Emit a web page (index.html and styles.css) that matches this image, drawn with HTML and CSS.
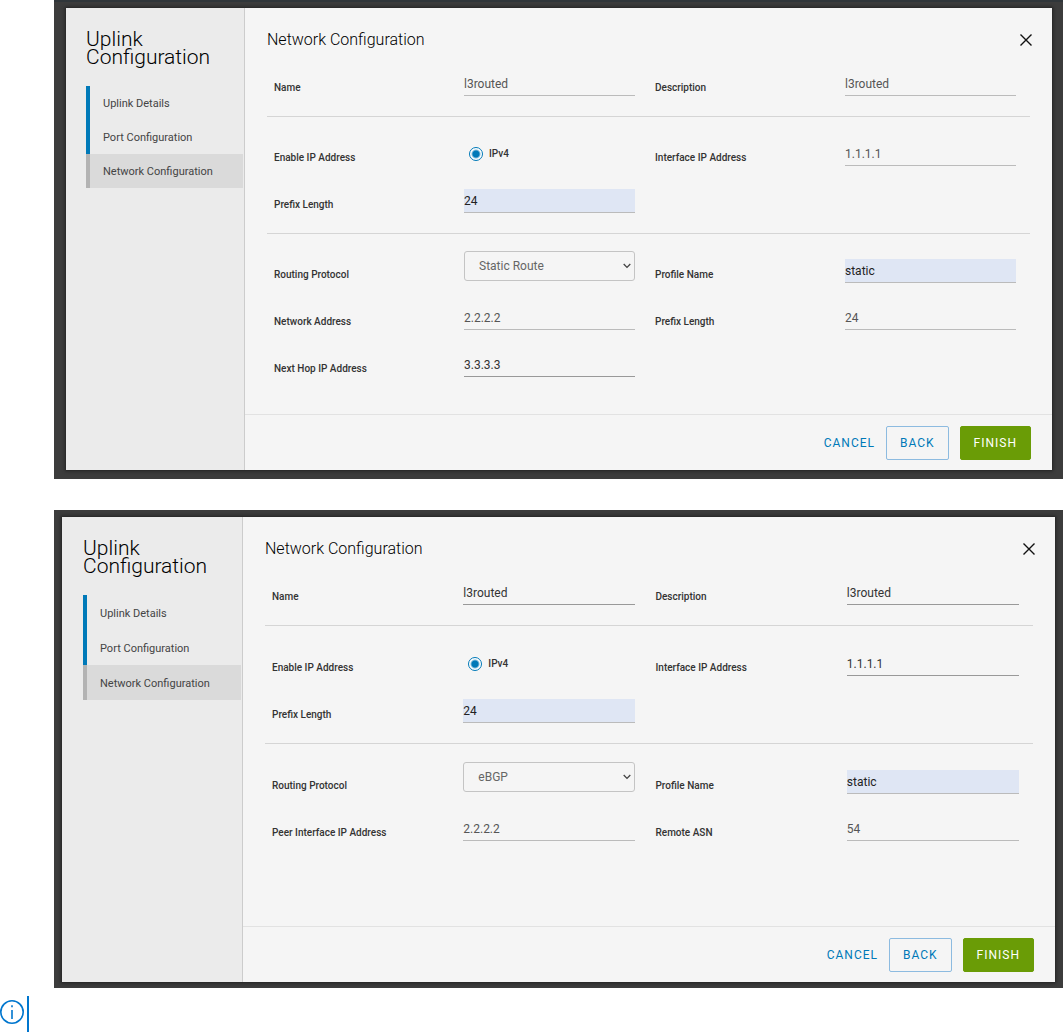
FILE: index.html
```html
<!DOCTYPE html>
<html lang="en">
<head>
  <meta charset="UTF-8" />
  <meta name="viewport" content="width=device-width, initial-scale=1.0"/>
  <title>Uplink Configuration</title>
  <link rel="stylesheet" href="styles.css">
</head>
<body>
  <main>
    <section class="backdrop backdrop-static">
      <div class="dialog">
        <aside class="sidebar">
          <h1>Uplink<br>Configuration</h1>
          <nav class="steps">
            <a href="#">Uplink Details</a>
            <a href="#">Port Configuration</a>
            <a href="#" class="current">Network Configuration</a>
          </nav>
        </aside>

        <form class="panel">
          <header class="panel-header">
            <h2>Network Configuration</h2>
            <button type="button" class="close" aria-label="Close">
              <svg width="12" height="12" viewBox="0 0 12 12"><path d="M.5.5l11 11M11.5.5l-11 11"/></svg>
            </button>
          </header>

          <div class="panel-body">
            <div class="group">
              <div class="row">
                <label for="s-name">Name</label>
                <input type="text" id="s-name" value="l3routed">
                <label for="s-description">Description</label>
                <input type="text" id="s-description" value="l3routed">
              </div>
            </div>

            <div class="group">
              <div class="row">
                <span class="label">Enable IP Address</span>
                <label class="radio"><input type="radio" name="s-ip" checked>IPv4</label>
                <label for="s-interface">Interface IP Address</label>
                <input type="text" id="s-interface" value="1.1.1.1">
              </div>
              <div class="row">
                <label for="s-prefix">Prefix Length</label>
                <input type="text" id="s-prefix" class="filled" value="24">
              </div>
            </div>

            <div class="group">
              <div class="row">
                <label for="s-protocol">Routing Protocol</label>
                <div class="select">
                  <select id="s-protocol"><option>Static Route</option><option>eBGP</option></select>
                  <svg width="8" height="6" viewBox="0 0 8 6"><path d="M.7 1L4 4.4 7.3 1"/></svg>
                </div>
                <label for="s-profile">Profile Name</label>
                <input type="text" id="s-profile" class="filled" value="static">
              </div>
              <div class="row">
                <label for="s-network">Network Address</label>
                <input type="text" id="s-network" value="2.2.2.2">
                <label for="s-network-prefix">Prefix Length</label>
                <input type="text" id="s-network-prefix" value="24">
              </div>
              <div class="row">
                <label for="s-hop">Next Hop IP Address</label>
                <input type="text" id="s-hop" class="dark" value="3.3.3.3">
              </div>
            </div>
          </div>

          <footer class="actions">
            <button type="button" class="btn btn-link">Cancel</button>
            <button type="button" class="btn btn-outline">Back</button>
            <button type="button" class="btn btn-primary">Finish</button>
          </footer>
        </form>
      </div>
    </section>

    <section class="backdrop backdrop-ebgp">
      <div class="dialog">
        <aside class="sidebar">
          <h1>Uplink<br>Configuration</h1>
          <nav class="steps">
            <a href="#">Uplink Details</a>
            <a href="#">Port Configuration</a>
            <a href="#" class="current">Network Configuration</a>
          </nav>
        </aside>

        <form class="panel">
          <header class="panel-header">
            <h2>Network Configuration</h2>
            <button type="button" class="close" aria-label="Close">
              <svg width="12" height="12" viewBox="0 0 12 12"><path d="M.5.5l11 11M11.5.5l-11 11"/></svg>
            </button>
          </header>

          <div class="panel-body">
            <div class="group">
              <div class="row">
                <label for="b-name">Name</label>
                <input type="text" id="b-name" class="dark" value="l3routed">
                <label for="b-description">Description</label>
                <input type="text" id="b-description" class="dark" value="l3routed">
              </div>
            </div>

            <div class="group">
              <div class="row">
                <span class="label">Enable IP Address</span>
                <label class="radio"><input type="radio" name="b-ip" checked>IPv4</label>
                <label for="b-interface">Interface IP Address</label>
                <input type="text" id="b-interface" class="dark" value="1.1.1.1">
              </div>
              <div class="row">
                <label for="b-prefix">Prefix Length</label>
                <input type="text" id="b-prefix" class="filled" value="24">
              </div>
            </div>

            <div class="group">
              <div class="row">
                <label for="b-protocol">Routing Protocol</label>
                <div class="select">
                  <select id="b-protocol"><option>eBGP</option><option>Static Route</option></select>
                  <svg width="8" height="6" viewBox="0 0 8 6"><path d="M.7 1L4 4.4 7.3 1"/></svg>
                </div>
                <label for="b-profile">Profile Name</label>
                <input type="text" id="b-profile" class="filled" value="static">
              </div>
              <div class="row">
                <label for="b-peer">Peer Interface IP Address</label>
                <input type="text" id="b-peer" value="2.2.2.2">
                <label for="b-asn">Remote ASN</label>
                <input type="text" id="b-asn" value="54">
              </div>
            </div>
          </div>

          <footer class="actions">
            <button type="button" class="btn btn-link">Cancel</button>
            <button type="button" class="btn btn-outline">Back</button>
            <button type="button" class="btn btn-primary">Finish</button>
          </footer>
        </form>
      </div>
    </section>
  </main>

  <div class="note">
    <svg width="24" height="24" viewBox="0 0 24 24">
      <circle cx="12" cy="12" r="11.2"/>
      <path d="M12 10v9M12 5.2v2"/>
    </svg>
  </div>
</body>
</html>
```
FILE: styles.css
```css
* {
  margin: 0;
  padding: 0;
  box-sizing: border-box;
}

body {
  font-family: Roboto, 'Liberation Sans', sans-serif;
  font-size: 12px;
  background-color: #fff;
  color: #333;
}

main {
  display: flex;
  flex-direction: column;
  gap: 31px;
  margin-left: 54px;
}

.backdrop {
  background-color: #3c3c3c;
}

.backdrop-static {
  --sidebar: 179px;
  --indent: 20px;
  --step: 34px;
  --group-top: 22px;
  --body-height: 345px;
  padding: 6px 11px 9px 12px;
  border-top: 2px solid #30363a;
}

.backdrop-ebgp {
  --sidebar: 181px;
  --indent: 21px;
  --step: 35px;
  --group-top: 23px;
  --body-height: 348px;
  padding: 7px 8px 6px;
}

.dialog {
  display: flex;
  background-color: #f5f5f5;
  box-shadow: 0 0 3px 1px #222;
}

/* wizard steps */
.sidebar {
  flex: none;
  width: var(--sidebar);
  padding: 22px 1px 0 var(--indent);
  background-color: #ebebeb;
  border-right: 1px solid #ccc;
}

.sidebar h1 {
  color: #000;
  font-size: 21px;
  font-weight: 300;
  line-height: 18px;
  margin-bottom: 20px;
}

.steps a {
  display: block;
  height: var(--step);
  line-height: var(--step);
  padding: 1px 0 0 13px;
  border-left: 4px solid #0079b8;
  color: #444;
  font-size: 11px;
  text-decoration: none;
  white-space: nowrap;
}

.steps .current {
  background-color: #dadada;
  border-color: #b3b3b3;
}

/* form */
.panel {
  flex: 1;
  min-width: 0;
}

.panel-header {
  display: flex;
  justify-content: space-between;
  align-items: center;
  height: 61px;
  padding: 2px 20px 0 22px;
}

.panel-header h2 {
  color: #000;
  font-size: 16px;
  font-weight: 300;
  line-height: 20px;
}

.close {
  display: flex;
  background: none;
  border: none;
  cursor: pointer;
}

.close path {
  stroke: #111;
  stroke-width: 1.4;
}

.panel-body {
  min-height: var(--body-height);
  padding: 0 22px;
}

.group + .group {
  padding-top: var(--group-top);
  border-top: 1px solid #d5d5d5;
}

.row {
  display: grid;
  grid-template-columns: 10fr 9fr 20px 10fr 9fr;
  grid-template-rows: 27px;
  align-items: end;
  height: 47px;
  padding: 0 14px 20px 7px;
}

.row > :nth-child(3) {
  grid-column: 4;
}

.row > label,
.row > .label {
  font-size: 10px;
  font-weight: 500;
  line-height: 16px;
}

.row > .radio {
  display: flex;
  align-items: center;
  gap: 6px;
  padding: 0 0 4px 5px;
}

.radio input {
  appearance: none;
  width: 14px;
  height: 14px;
  border: 1px solid #0079b8;
  border-radius: 50%;
  background: radial-gradient(circle, #0079b8 3px, #fff 5px);
}

input[type="text"] {
  width: 100%;
  height: 24px;
  border: none;
  border-bottom: 1px solid #bbb;
  border-radius: 0;
  background: none;
  color: #555;
  font: inherit;
}

input.dark {
  border-color: #999;
  color: #333;
}

input.filled {
  background-color: #dfe6f4;
  color: #222;
}

.select {
  position: relative;
  margin-bottom: 2px;
}

.select select {
  appearance: none;
  display: block;
  width: 100%;
  height: 30px;
  padding: 0 20px 0 14px;
  border: 1px solid #c4c4c4;
  border-radius: 3px;
  background-color: #f5f5f5;
  color: #666;
  font: inherit;
}

.select svg {
  position: absolute;
  top: 12px;
  right: 4px;
  pointer-events: none;
}

.select path {
  fill: none;
  stroke: #444;
  stroke-width: 1.3;
}

.actions {
  display: flex;
  justify-content: flex-end;
  align-items: center;
  gap: 11px;
  height: 56px;
  padding: 1px 21px 0 0;
  border-top: 1px solid #e2e2e2;
}

.btn {
  height: 34px;
  padding: 0 13px;
  border: 1px solid transparent;
  border-radius: 2px;
  background: none;
  font-family: inherit;
  font-size: 12px;
  font-weight: 400;
  letter-spacing: 1px;
  text-transform: uppercase;
  cursor: pointer;
}

.btn-link {
  padding: 0;
  border: none;
  color: #0079b8;
}

.btn-outline {
  border-color: #8dbbe0;
  color: #0079b8;
}

.btn-primary {
  background-color: #6a9c06;
  border-color: #6a9c06;
  color: #fff;
}

/* info note under the dialogs */
.note {
  display: flex;
  align-items: center;
  width: 29px;
  height: 36px;
  margin-top: 8px;
  padding-bottom: 4px;
  border-right: 2px solid #0076ce;
}

.note svg {
  fill: none;
  stroke: #0076ce;
  stroke-width: 1.6;
}
```
